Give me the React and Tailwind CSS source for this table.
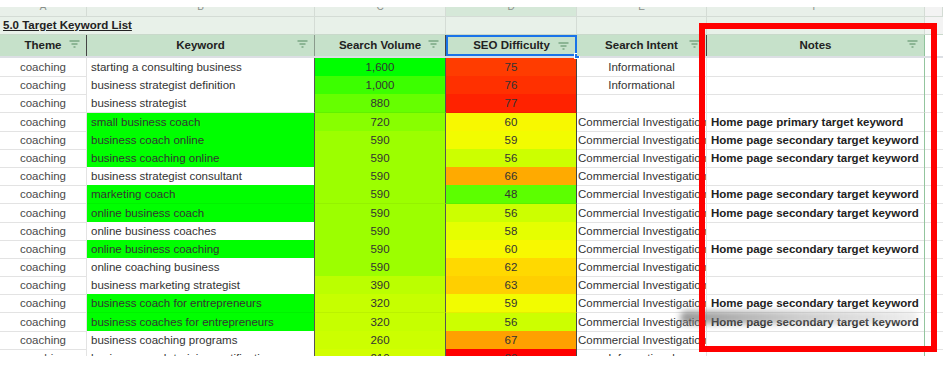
import React from "react";

const cols = "grid grid-cols-[87px_228px_131px_131px_130px_218px_18px]";

const rows = [
  { kw: "starting a consulting business", kwBg: "bg-white", vol: "1,600", volBg: "bg-[#00ff00]", seo: "75", seoBg: "bg-[#ff3c00]", intent: "Informational", note: "" },
  { kw: "business strategist definition", kwBg: "bg-white", vol: "1,000", volBg: "bg-[#3cff00]", seo: "76", seoBg: "bg-[#ff3000]", intent: "Informational", note: "" },
  { kw: "business strategist", kwBg: "bg-white", vol: "880", volBg: "bg-[#66ff00]", seo: "77", seoBg: "bg-[#ff2200]", intent: "", note: "" },
  { kw: "small business coach", kwBg: "bg-[#00ff00]", vol: "720", volBg: "bg-[#88ff00]", seo: "60", seoBg: "bg-[#f8f800]", intent: "ci", note: "Home page primary target keyword" },
  { kw: "business coach online", kwBg: "bg-[#00ff00]", vol: "590", volBg: "bg-[#9cff00]", seo: "59", seoBg: "bg-[#f2fc00]", intent: "ci", note: "Home page secondary target keyword" },
  { kw: "business coaching online", kwBg: "bg-[#00ff00]", vol: "590", volBg: "bg-[#9cff00]", seo: "56", seoBg: "bg-[#ccff00]", intent: "ci", note: "Home page secondary target keyword" },
  { kw: "business strategist consultant", kwBg: "bg-white", vol: "590", volBg: "bg-[#9cff00]", seo: "66", seoBg: "bg-[#ffaa00]", intent: "ci", note: "" },
  { kw: "marketing coach", kwBg: "bg-[#00ff00]", vol: "590", volBg: "bg-[#9cff00]", seo: "48", seoBg: "bg-[#5cff00]", intent: "ci", note: "Home page secondary target keyword" },
  { kw: "online business coach", kwBg: "bg-[#00ff00]", vol: "590", volBg: "bg-[#9cff00]", seo: "56", seoBg: "bg-[#ccff00]", intent: "ci", note: "Home page secondary target keyword" },
  { kw: "online business coaches", kwBg: "bg-white", vol: "590", volBg: "bg-[#9cff00]", seo: "58", seoBg: "bg-[#e5ff00]", intent: "ci", note: "" },
  { kw: "online business coaching", kwBg: "bg-[#00ff00]", vol: "590", volBg: "bg-[#9cff00]", seo: "60", seoBg: "bg-[#f8f800]", intent: "ci", note: "Home page secondary target keyword" },
  { kw: "online coaching business", kwBg: "bg-white", vol: "590", volBg: "bg-[#9cff00]", seo: "62", seoBg: "bg-[#ffd900]", intent: "ci", note: "" },
  { kw: "business marketing strategist", kwBg: "bg-white", vol: "390", volBg: "bg-[#bbff00]", seo: "63", seoBg: "bg-[#ffcf00]", intent: "ci", note: "" },
  { kw: "business coach for entrepreneurs", kwBg: "bg-[#00ff00]", vol: "320", volBg: "bg-[#c6ff00]", seo: "59", seoBg: "bg-[#f2fc00]", intent: "ci", note: "Home page secondary target keyword" },
  { kw: "business coaches for entrepreneurs", kwBg: "bg-[#00ff00]", vol: "320", volBg: "bg-[#c6ff00]", seo: "56", seoBg: "bg-[#ccff00]", intent: "ci", note: "Home page secondary target keyword" },
  { kw: "business coaching programs", kwBg: "bg-white", vol: "260", volBg: "bg-[#ccff00]", seo: "67", seoBg: "bg-[#ffa000]", intent: "ci", note: "" },
  { kw: "business coach training certification", kwBg: "bg-white", vol: "210", volBg: "bg-[#d2ff00]", seo: "80", seoBg: "bg-[#ff0000]", intent: "Informational", note: "" },
];

function FilterIcon() {
  return (
    <svg width="11" height="8" viewBox="0 0 11 8" className="shrink-0">
      <path d="M0.5 1h10M2.5 4h6M4.5 7h2" stroke="#7aa683" strokeWidth="1.3" />
    </svg>
  );
}

function Header({ label, border = "border-r border-[#444]" }) {
  return (
    <div className={`relative flex items-center justify-center h-full bg-[#c6e1ca] ${border}`}>
      <span className="font-bold text-[#222]">{label}</span>
      <span className="absolute right-[6px] top-[5px]">
        <FilterIcon />
      </span>
    </div>
  );
}

export default function App() {
  return (
    <div
      className="relative w-[943px] h-[375px] bg-white overflow-hidden text-[11.5px]"
      style={{ fontFamily: "'Liberation Sans', Arial, sans-serif" }}
    >
      <div className="h-[7px] bg-white" />
      {/* column letters */}
      <div className={`${cols} h-[10px] overflow-hidden bg-[#e8f0e9] border-b border-[#d4dcd5] text-[#8a8f8b] text-[10px]`}>
        {["A", "B", "C", "D", "E", "F", ""].map((l, i) => (
          <div
            key={i}
            className={`flex justify-center leading-[10px] -mt-[5px] border-r border-[#d4dcd5] ${i === 3 ? "bg-[#d5e8d8]" : ""} ${i === 6 ? "bg-[#f3f3f3]" : ""}`}
          >
            {l}
          </div>
        ))}
      </div>
      {/* title row */}
      <div className={`${cols} h-[18px] bg-[#e8f1e9] border-b border-[#c9d9cb]`}>
        <div className="col-span-2 border-r border-[#d4dcd5] flex items-center pl-[3px]">
          <span className="font-bold underline text-[#222] whitespace-nowrap">5.0 Target Keyword List</span>
        </div>
        <div className="border-r border-[#d4dcd5]" />
        <div className="border-r border-[#d4dcd5]" />
        <div className="border-r border-[#d4dcd5]" />
        <div className="border-r border-[#d4dcd5]" />
        <div className="bg-[#f3f3f3]" />
      </div>
      {/* header row */}
      <div className={`${cols} h-[19px] border-b border-[#333]`}>
        <Header label="Theme" />
        <Header label="Keyword" border="border-r border-[#8a9a8c]" />
        <Header label="Search Volume" />
        <div className="relative h-full">
          <Header label="SEO Difficulty" border="border-2 border-[#1a73e8]" />
          <div className="absolute -right-[3px] -bottom-[3px] w-[6px] h-[6px] bg-[#1a73e8] border border-white" />
        </div>
        <Header label="Search Intent" />
        <Header label="Notes" border="border-r border-[#8fc39b]" />
        <div className="bg-white" />
      </div>
      <div className="h-[4px] bg-[#dcdfe4]" />
      {/* data rows */}
      <div className="h-[298px] overflow-hidden">
        {rows.map((r, i) => (
          <div key={i} className={`${cols} h-[18.2px] leading-[18px]`}>
            <div className="text-center text-[#4a4a4a] border-r border-[#333] border-b border-[#e3e3e3]">coaching</div>
            <div className={`pl-[4px] text-[#333] whitespace-nowrap overflow-hidden border-r border-[#555] border-b ${r.kwBg === "bg-white" ? "border-b-[#e3e3e3]" : "border-b-black/5"} ${r.kwBg}`}>
              {r.kw}
            </div>
            <div className={`text-center text-[#333] border-r border-[#555] border-b border-b-black/5 ${r.volBg}`}>{r.vol}</div>
            <div className={`text-center text-[#333] border-r border-[#444] border-b border-b-black/5 ${r.seoBg}`}>{r.seo}</div>
            {r.intent === "ci" ? (
              <div className="pl-[1px] text-[#333] whitespace-nowrap overflow-hidden border-r border-[#333] border-b border-[#e3e3e3]">
                Commercial Investigation
              </div>
            ) : (
              <div className="text-center text-[#333] border-r border-[#333] border-b border-[#e3e3e3]">{r.intent}</div>
            )}
            <div className="pl-[4px] font-bold text-[#222] whitespace-nowrap overflow-hidden border-r border-r-[#93c59e] border-b border-b-[#e3e3e3]">
              {r.note}
            </div>
            <div className="border-b border-[#e3e3e3]" />
          </div>
        ))}
      </div>

      {/* grey smear */}
      <div className="absolute left-[680px] top-[311px] w-[238px] h-[13px] rounded-full bg-gradient-to-r from-[#6b6b6b]/70 via-[#9a9a9a]/50 to-[#c8c8c8]/30 blur-[3px]" />

      {/* red highlight box */}
      <div className="absolute left-[699px] top-[23px] w-[238px] h-[329px] border-[6px] border-[#ff0000]" />
    </div>
  );
}
